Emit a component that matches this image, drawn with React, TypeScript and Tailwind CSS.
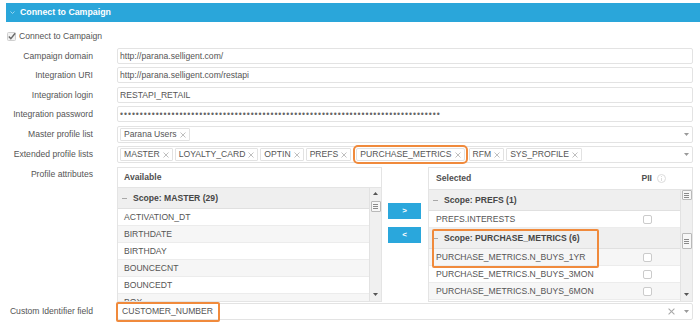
import React from "react";

const X = ({ c = "#b8b8b8", s = 6 }: { c?: string; s?: number }) => (
  <svg width={s} height={s} viewBox="0 0 6 6" className="shrink-0">
    <path d="M0.5 0.5L5.5 5.5M5.5 0.5L0.5 5.5" stroke={c} strokeWidth="0.9" />
  </svg>
);

const Caret = () => (
  <svg width="5" height="3" viewBox="0 0 5 3" className="shrink-0">
    <path d="M0 0H5L2.5 3Z" fill="#9a9a9a" />
  </svg>
);

const Up = () => (
  <svg width="5" height="3" viewBox="0 0 5 3" className="shrink-0">
    <path d="M0 3H5L2.5 0Z" fill="#555" />
  </svg>
);

const Down = () => (
  <svg width="5" height="3" viewBox="0 0 5 3" className="shrink-0">
    <path d="M0 0H5L2.5 3Z" fill="#555" />
  </svg>
);

const Thumb = ({ h }: { h: string }) => (
  <div
    className={`w-[10px] ${h} border border-[#b9b9b9] bg-[#f7f7f7] rounded-[1px] flex flex-col items-center justify-center gap-[1px] shrink-0`}
  >
    <div className="w-[5px] h-[1px] bg-[#8a8a8a]" />
    <div className="w-[5px] h-[1px] bg-[#8a8a8a]" />
    <div className="w-[5px] h-[1px] bg-[#8a8a8a]" />
  </div>
);

const Tag = ({ label, hl }: { label: string; hl?: boolean }) => (
  <span
    className={
      hl
        ? "h-[13px] flex items-center gap-[3px] pl-[3px] pr-[3px] border border-[#e2e2e2] outline-2 outline-solid outline-[#f08a3c] outline-offset-[1px] rounded-[2px] shrink-0"
        : "h-[13px] flex items-center gap-[3px] pl-[3px] pr-[3px] border border-[#e2e2e2] rounded-[1px] shrink-0"
    }
  >
    <span>{label}</span>
    <X />
  </span>
);

const Row = ({
  label,
  children,
  className = "",
}: {
  label: string;
  children: React.ReactNode;
  className?: string;
}) => (
  <div className={`flex items-center ${className}`}>
    <div className="w-[87px] shrink-0 text-right">{label}</div>
    <div className="ml-[24px] flex-1 min-w-0">{children}</div>
  </div>
);

const TextInput = ({ value }: { value: string }) => (
  <div className="h-[16px] border border-[#e3e3e3] rounded-[2px] flex items-center pl-[2px] overflow-hidden whitespace-nowrap">
    {value}
  </div>
);

const Minus = () => <div className="w-[5px] h-[1px] bg-[#a8a8a8] shrink-0" />;

const Scope = ({ label }: { label: string }) => (
  <div className="h-[21px] bg-[#efefef] border-b border-[#e0e0e0] flex items-center pl-[4px] gap-[6px] font-bold text-[#464646]">
    <Minus />
    <span>{label}</span>
  </div>
);

const Item = ({ label, odd }: { label: string; odd?: boolean }) => (
  <div
    className={
      odd
        ? "h-[17px] border-b border-[#ececec] bg-[#f6f6f6] flex items-center pl-[6px]"
        : "h-[17px] border-b border-[#ececec] bg-white flex items-center pl-[6px]"
    }
  >
    {label}
  </div>
);

const Box = () => (
  <span className="w-[9px] h-[9px] border border-[#cbcbcb] rounded-[2px] bg-white shrink-0" />
);

const SelItem = ({ label, odd }: { label: string; odd?: boolean }) => (
  <div
    className={
      odd
        ? "h-[17px] border-b border-[#ececec] bg-[#f6f6f6] flex items-center justify-between pl-[7px] pr-[28px]"
        : "h-[17px] border-b border-[#ececec] bg-white flex items-center justify-between pl-[7px] pr-[28px]"
    }
  >
    <span>{label}</span>
    <Box />
  </div>
);

export default function App() {
  const dots = "•".repeat(81);
  return (
    <div className="w-[700px] h-[327px] overflow-hidden bg-white pt-[3px] pl-[6px] font-['Liberation_Sans',Arial,sans-serif] text-[8.6px] leading-none text-[#555]">
      {/* header */}
      <div className="h-[19px] bg-[#2aa6da] flex items-center pl-[4px] gap-[5px]">
        <svg width="5" height="3" viewBox="0 0 5 3" className="shrink-0">
          <path d="M0.5 0.5L2.5 2.5L4.5 0.5" stroke="#a6daf0" strokeWidth="0.9" fill="none" />
        </svg>
        <span className="font-bold text-white text-[8.8px]">Connect to Campaign</span>
      </div>

      {/* checkbox */}
      <div className="mt-[10px] h-[9px] flex items-center gap-[3px] pl-[1px]">
        <svg width="9" height="9" viewBox="0 0 9 9" className="shrink-0">
          <rect x="0.5" y="0.5" width="8" height="8" rx="1" fill="#f2f2f2" stroke="#cfcfcf" />
          <path d="M1.8 4.6L3.8 6.6L8.2 1.2" stroke="#6a6a6a" strokeWidth="1.4" fill="none" />
        </svg>
        <span>Connect to Campaign</span>
      </div>

      {/* form */}
      <div className="pr-[7px] flex flex-col">
        <Row label="Campaign domain" className="mt-[7px]">
          <TextInput value="http://parana.selligent.com/" />
        </Row>
        <Row label="Integration URI" className="mt-[3px]">
          <TextInput value="http://parana.selligent.com/restapi" />
        </Row>
        <Row label="Integration login" className="mt-[4px]">
          <TextInput value="RESTAPI_RETAIL" />
        </Row>
        <Row label="Integration password" className="mt-[3px]">
          <div className="h-[16px] border border-[#e3e3e3] rounded-[2px] flex items-center pl-[2px] overflow-hidden whitespace-nowrap tracking-[0.95px] text-[#666]">
            {dots}
          </div>
        </Row>
        <Row label="Master profile list" className="mt-[4px]">
          <div className="h-[17px] border border-[#e3e3e3] rounded-[2px] flex items-center pl-[2px] pr-[3px]">
            <Tag label="Parana Users" />
            <div className="flex-1" />
            <Caret />
          </div>
        </Row>
        <Row label="Extended profile lists" className="mt-[3px]">
          <div className="h-[17px] border border-[#e3e3e3] rounded-[2px] flex items-center pl-[2px] pr-[3px] gap-[2px]">
            <Tag label="MASTER" />
            <Tag label="LOYALTY_CARD" />
            <Tag label="OPTIN" />
            <Tag label="PREFS" />
            <div className="w-[1px]" />
            <Tag label="PURCHASE_METRICS" hl />
            <div className="w-[0px]" />
            <Tag label="RFM" />
            <Tag label="SYS_PROFILE" />
            <div className="flex-1" />
            <Caret />
          </div>
        </Row>

        {/* profile attributes */}
        <div className="flex mt-[4px]">
          <div className="w-[87px] shrink-0 text-right pt-[3px]">Profile attributes</div>
          <div className="ml-[24px] flex-1 flex h-[135px]">
            {/* available */}
            <div className="w-[265px] shrink-0 border border-[#e4e4e4] flex flex-col">
              <div className="h-[20px] border-b border-[#e4e4e4] flex items-center pl-[6px] font-bold text-[#505050] shrink-0">
                Available
              </div>
              <div className="flex-1 flex min-h-0">
                <div className="flex-1 overflow-hidden">
                  <Scope label="Scope: MASTER (29)" />
                  <Item label="ACTIVATION_DT" />
                  <Item label="BIRTHDATE" odd />
                  <Item label="BIRTHDAY" />
                  <Item label="BOUNCECNT" odd />
                  <Item label="BOUNCEDT" />
                  <Item label="BOX" odd />
                </div>
                <div className="w-[12px] bg-[#f0f0f0] border-l border-[#e2e2e2] flex flex-col items-center shrink-0">
                  <div className="mt-[4px]">
                    <Up />
                  </div>
                  <div className="mt-[6px]">
                    <Thumb h="h-[11px]" />
                  </div>
                  <div className="flex-1" />
                  <div className="mb-[5px]">
                    <Down />
                  </div>
                </div>
              </div>
            </div>

            {/* buttons */}
            <div className="w-[33px] ml-[6px] mr-[7px] pt-[36px] flex flex-col gap-[8px] shrink-0">
              <div className="h-[16px] bg-[#2aa7dc] text-white flex items-center justify-center font-bold text-[8px]">
                &gt;
              </div>
              <div className="h-[16px] bg-[#2aa7dc] text-white flex items-center justify-center font-bold text-[8px]">
                &lt;
              </div>
            </div>

            {/* selected */}
            <div className="flex-1 border border-[#e4e4e4] flex flex-col min-w-0">
              <div className="h-[22px] border-b border-[#e4e4e4] flex items-center pl-[7px] pr-[26px] font-bold text-[#505050] shrink-0">
                <span className="flex-1">Selected</span>
                <span>PII</span>
                <svg width="9" height="9" viewBox="0 0 9 9" className="ml-[5px] shrink-0">
                  <circle cx="4.5" cy="4.5" r="4" fill="none" stroke="#dcdcdc" />
                  <path d="M4.5 4V7M4.5 2V3" stroke="#dcdcdc" strokeWidth="1" />
                </svg>
              </div>
              <div className="flex-1 flex min-h-0">
                <div className="flex-1 overflow-hidden">
                  <Scope label="Scope: PREFS (1)" />
                  <SelItem label="PREFS.INTERESTS" />
                  <div className="relative">
                    <Scope label="Scope: PURCHASE_METRICS (6)" />
                    <SelItem label="PURCHASE_METRICS.N_BUYS_1YR" odd />
                    <div className="absolute left-[3px] top-[1px] w-[167px] h-[39px] border-2 border-[#f08a3c] rounded-[2px] pointer-events-none" />
                  </div>
                  <SelItem label="PURCHASE_METRICS.N_BUYS_3MON" />
                  <SelItem label="PURCHASE_METRICS.N_BUYS_6MON" odd />
                </div>
                <div className="w-[12px] bg-[#f0f0f0] border-l border-[#e2e2e2] flex flex-col items-center shrink-0">
                  <Thumb h="h-[10px]" />
                  <div className="mt-[33px]">
                    <Thumb h="h-[16px]" />
                  </div>
                  <div className="flex-1" />
                  <div className="mb-[5px]">
                    <Down />
                  </div>
                </div>
              </div>
            </div>
          </div>
        </div>

        {/* custom identifier */}
        <Row label="Custom Identifier field" className="mt-[1px]">
          <div className="relative h-[17px] border border-[#e3e3e3] rounded-[2px] flex items-center pl-[4px] pr-[3px]">
            <span>CUSTOMER_NUMBER</span>
            <div className="flex-1" />
            <X c="#a8a8a8" s={7} />
            <div className="w-[9px]" />
            <Caret />
            <div className="absolute left-[-2px] top-[-2px] w-[104px] h-[20px] border-2 border-[#f08a3c] rounded-[2px] pointer-events-none" />
          </div>
        </Row>
      </div>
    </div>
  );
}
